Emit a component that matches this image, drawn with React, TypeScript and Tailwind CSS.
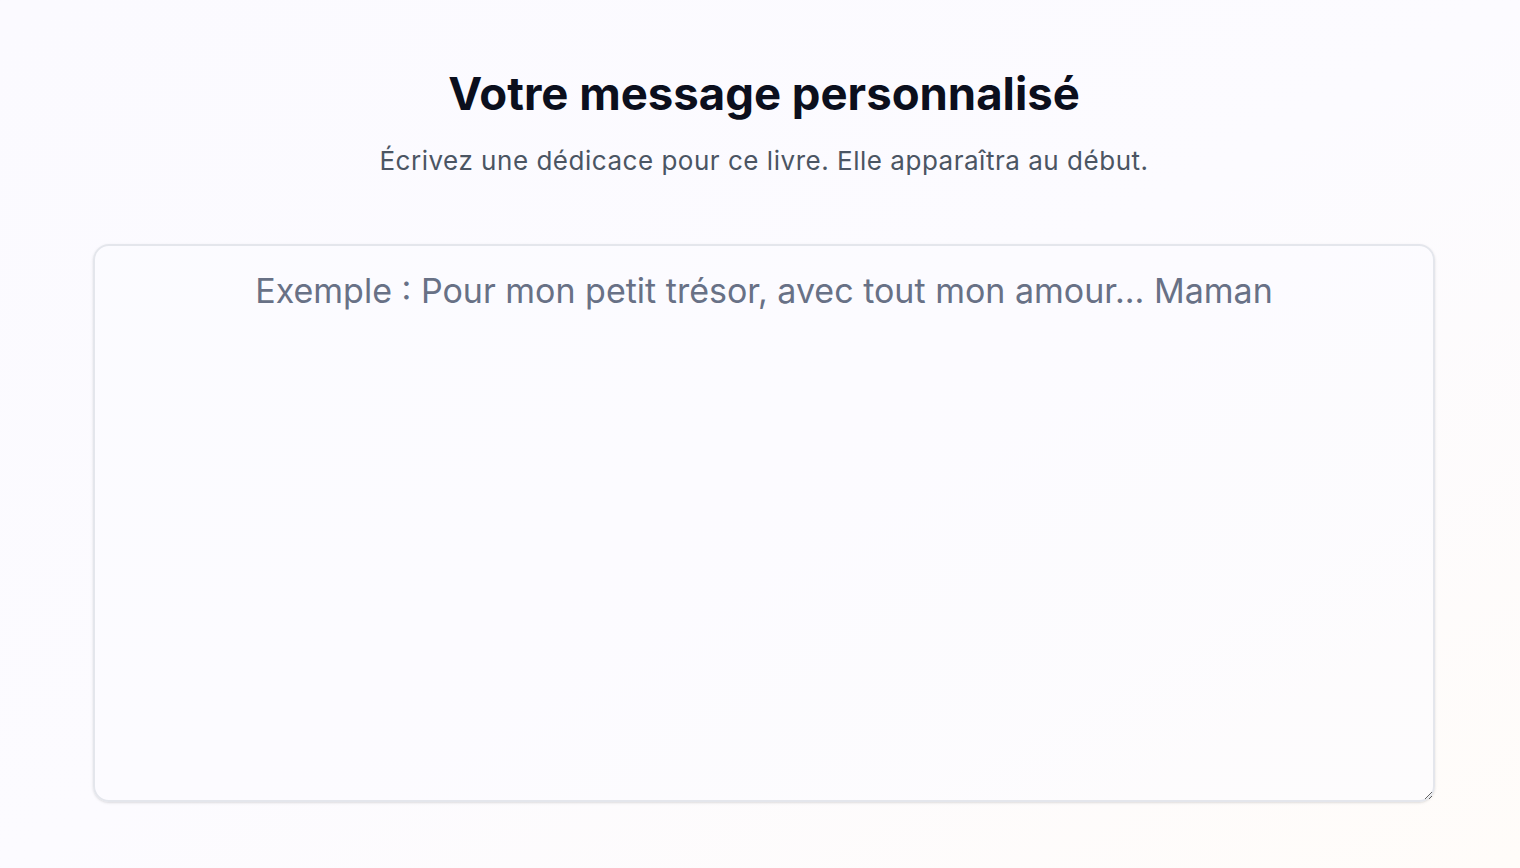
export default function App() {
  return (
    <div
      className="min-h-screen w-full bg-gradient-to-br from-[#fbfaff] via-[#fcfbff] to-[#fffcf9] pl-[93px] pr-[85px] pt-[66px]"
      style={{ fontFamily: 'Inter, "Noto Sans", sans-serif' }}
    >
      {/* Header */}
      <header className="text-center">
        <h1 className="text-[45.5px] leading-[56px] font-bold text-[#0b0f1d]">
          Votre message personnalisé
        </h1>
        <p className="mt-[23px] text-[26px] leading-8 tracking-[0.02em] text-[#4b5563]">
          Écrivez une dédicace pour ce livre. Elle apparaîtra au début.
        </p>
      </header>

      {/* Dedication input */}
      <div className="mt-[67px]">
        <textarea
          className="block w-full h-[558px] resize-y rounded-2xl border-2 border-[#e4e6ec] bg-[#fcfbff]/60 px-6 pt-[23px] text-center text-[34px] leading-[44px] text-gray-900 placeholder:text-[#687186] shadow-sm outline-none"
          placeholder="Exemple : Pour mon petit trésor, avec tout mon amour... Maman"
        />
      </div>
    </div>
  );
}
